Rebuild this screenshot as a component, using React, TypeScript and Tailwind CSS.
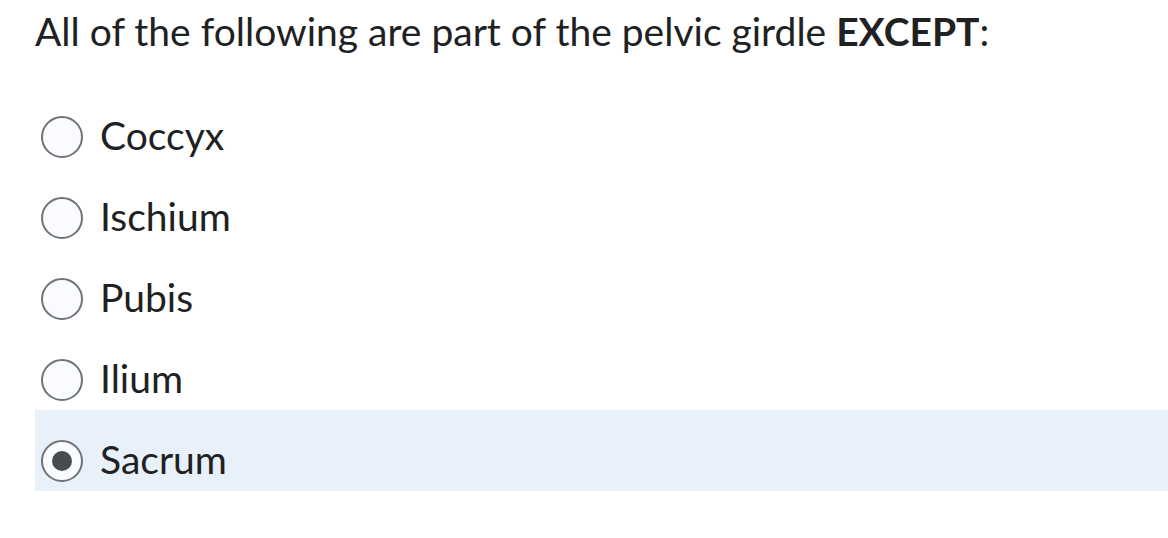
import React from "react";

const options = ["Coccyx", "Ischium", "Pubis", "Ilium", "Sacrum"];
const selected = "Sacrum";

export default function App() {
  return (
    <div
      className="w-[1168px] h-[538px] bg-white text-[#202122] pl-[35px] pt-[7px]"
      style={{ fontFamily: "Lato, 'Noto Sans', sans-serif" }}
    >
      <h1 className="text-[39px] leading-[48px] font-normal">
        All of the following are part of the pelvic girdle <span className="font-bold">EXCEPT</span>:
      </h1>
      <div className="mt-[31px] flex flex-col">
        {options.map((o) => {
          const isSel = o === selected;
          return (
            <label
              key={o}
              className={`h-[81px] pt-[30px] pl-[6px] flex items-start ${isSel ? "bg-[#e8f0fa]" : ""}`}
            >
              <div className="flex items-center h-[42px]">
                <span className="shrink-0 w-[42px] h-[42px] rounded-full border-2 border-[#6e7376] bg-[#f9fbfe] flex items-center justify-center">
                  {isSel && <span className="w-[20px] h-[20px] rounded-full bg-[#494c4e]" />}
                </span>
                <span className="ml-[17px] pb-[3px] text-[39px] leading-[47px]">{o}</span>
              </div>
            </label>
          );
        })}
      </div>
    </div>
  );
}
